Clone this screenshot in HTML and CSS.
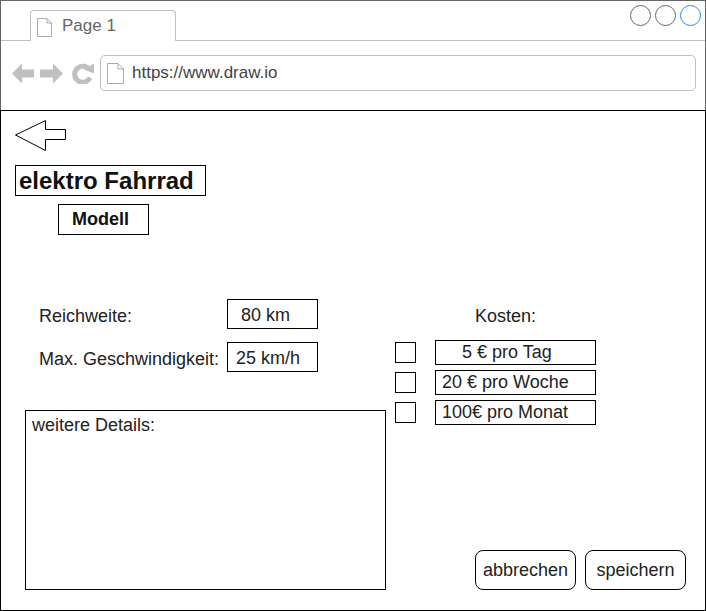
FILE: index.html
```html
<!DOCTYPE html>
<html lang="de">
<head>
    <meta charset="UTF-8">
    <meta name="viewport" content="width=device-width, initial-scale=1.0">
    <title>Fahrrad mieten</title>
    <link rel="stylesheet" href="styles.css">
</head>
<body>
    <div class="window">
        <header class="chrome">
            <div class="tabbar">
                <div class="tab">
                    <svg class="file" width="15" height="19" viewBox="0 0 15 19">
                        <path d="M0.5 0.5 H10 L14.5 5 V18.5 H0.5 Z" fill="#fff" stroke="#aaa"/>
                        <path d="M10 0.5 V5 H14.5" fill="none" stroke="#aaa"/>
                    </svg>
                    <span>Page 1</span>
                </div>
                <div class="dots">
                    <span class="dot"></span>
                    <span class="dot"></span>
                    <span class="dot blue"></span>
                </div>
            </div>
            <div class="navbar">
                <svg class="nav" width="22" height="21" viewBox="0 0 22 21">
                    <polygon points="0,10.5 10,0.5 10,6.5 22,6.5 22,14.5 10,14.5 10,20.5" fill="#c0c0c0"/>
                </svg>
                <svg class="nav" width="23" height="21" viewBox="0 0 23 21">
                    <polygon points="23,10.5 13,0.5 13,6.5 0,6.5 0,14.5 13,14.5 13,20.5" fill="#c0c0c0"/>
                </svg>
                <svg class="nav" width="22" height="21" viewBox="0 0 22 21">
                    <path d="M17.5 7 A8 8 0 1 0 18 14.5" fill="none" stroke="#c0c0c0" stroke-width="5"/>
                    <polygon points="12,6.5 22,0.5 22,10.5" fill="#c0c0c0"/>
                </svg>
                <div class="url">
                    <svg class="file" width="17" height="21" viewBox="0 0 17 21">
                        <path d="M0.5 0.5 H11 L16.5 6 V20.5 H0.5 Z" fill="#fff" stroke="#aaa"/>
                        <path d="M11 0.5 V6 H16.5" fill="none" stroke="#aaa"/>
                    </svg>
                    <span>https://www.draw.io</span>
                </div>
            </div>
        </header>

        <main class="page">
            <svg class="back" width="53" height="31" viewBox="0 0 53 31">
                <polygon points="0.5,15 30.5,0.5 30.5,9.5 50.5,9.5 50.5,19.5 30.5,19.5 30.5,30.5" fill="#fff" stroke="#000"/>
            </svg>
            <div class="title">elektro Fahrrad</div>
            <div class="model">Modell</div>

            <div class="form">
                <div class="specs">
                    <div class="spec-row">
                        <span class="label">Reichweite:</span>
                        <span class="value"> 80 km</span>
                    </div>
                    <div class="spec-row">
                        <span class="label">Max. Geschwindigkeit:</span>
                        <span class="value">25 km/h</span>
                    </div>
                    <div class="details">weitere Details:</div>
                </div>

                <div class="costs">
                    <div class="costs-head">Kosten:</div>
                    <ul class="prices">
                        <li><span class="check"></span><span class="price">    5 € pro Tag</span></li>
                        <li><span class="check"></span><span class="price">20 € pro Woche</span></li>
                        <li><span class="check"></span><span class="price">100€ pro Monat</span></li>
                    </ul>
                    <div class="actions">
                        <button class="btn">abbrechen</button>
                        <button class="btn">speichern</button>
                    </div>
                </div>
            </div>
        </main>
    </div>
</body>
</html>
```

FILE: styles.css
```css
body {
    margin: 0;
    font-family: "Liberation Sans", Arial, sans-serif;
    color: #222;
    background: #fff;
}

.window {
    width: 706px;
    height: 611px;
    display: flex;
    flex-direction: column;
}

/* Browser chrome */
.chrome {
    height: 110px;
    box-sizing: border-box;
    border: 1px solid #666;
    border-bottom: none;
    display: flex;
    flex-direction: column;
}

.tabbar {
    height: 40px;
    box-sizing: border-box;
    border-bottom: 1px solid #c0c0c0;
    display: flex;
}

.tab {
    align-self: flex-end;
    width: 146px;
    height: 31px;
    box-sizing: border-box;
    margin: 0 0 -1px 29px;
    padding: 0 0 0 6px;
    border: 1px solid #c0c0c0;
    border-bottom: none;
    border-radius: 4px 4px 0 0;
    background: #fff;
    display: flex;
    align-items: center;
    gap: 10px;
    font-size: 17px;
    color: #666;
}

.tab .file {
    margin-top: 2px;
}

.dots {
    margin: 4px 4px 0 auto;
    display: flex;
    gap: 4px;
}

.dot {
    width: 21px;
    height: 21px;
    box-sizing: border-box;
    border: 1px solid #666;
    border-radius: 50%;
}

.dot.blue {
    border-color: #1a8cff;
}

.navbar {
    flex: 1;
    display: flex;
    align-items: flex-start;
    padding: 14px 9px 0 11px;
}

.nav {
    margin-top: 8px;
    margin-right: 6px;
}

.nav:nth-of-type(2) {
    margin-right: 9px;
}

.url {
    flex: 1;
    height: 36px;
    box-sizing: border-box;
    padding-left: 6px;
    border: 1px solid #c0c0c0;
    border-radius: 5px;
    display: flex;
    align-items: center;
    gap: 8px;
    font-size: 17px;
    color: #444;
}

/* Page content */
.page {
    flex: 1;
    box-sizing: border-box;
    border: 1px solid #000;
    display: flex;
    flex-direction: column;
    align-items: flex-start;
    font-size: 18px;
}

.back {
    display: block;
    margin: 9px 0 0 14px;
}

.title {
    width: 191px;
    height: 31px;
    box-sizing: border-box;
    margin: 14px 0 0 14px;
    padding-left: 3px;
    border: 1px solid #000;
    font-size: 24px;
    font-weight: bold;
    line-height: 30px;
    color: #111;
}

.model {
    width: 91px;
    height: 31px;
    box-sizing: border-box;
    margin: 8px 0 0 57px;
    padding-left: 13px;
    border: 1px solid #000;
    font-weight: bold;
    line-height: 29px;
    color: #111;
}

.form {
    align-self: stretch;
    display: flex;
    gap: 9px;
    margin: 64px 19px 0 24px;
}

.specs {
    width: 361px;
    display: flex;
    flex-direction: column;
}

.spec-row {
    display: flex;
    align-items: center;
    height: 30px;
    padding-left: 14px;
}

.spec-row + .spec-row {
    margin-top: 13px;
}

.label {
    width: 188px;
    padding-top: 4px;
}

.value {
    width: 91px;
    height: 30px;
    box-sizing: border-box;
    padding: 1px 0 0 8px;
    border: 1px solid #000;
    line-height: 28px;
    white-space: pre;
}

.details {
    height: 180px;
    box-sizing: border-box;
    margin-top: 38px;
    padding: 4px 6px;
    border: 1px solid #000;
}

.costs {
    flex: 1;
    display: flex;
    flex-direction: column;
}

.costs-head {
    height: 30px;
    padding: 3px 0 0 80px;
    box-sizing: border-box;
    line-height: 28px;
}

.prices {
    list-style: none;
    margin: 11px 0 0;
    padding: 0;
    display: flex;
    flex-direction: column;
    gap: 5px;
}

.prices li {
    display: flex;
    align-items: center;
    height: 25px;
}

.check {
    width: 21px;
    height: 21px;
    box-sizing: border-box;
    border: 1px solid #000;
}

.price {
    width: 161px;
    height: 25px;
    box-sizing: border-box;
    margin-left: 19px;
    padding-left: 6px;
    border: 1px solid #000;
    line-height: 23px;
    white-space: pre;
}

.actions {
    margin-top: auto;
    align-self: flex-end;
    display: flex;
    gap: 9px;
}

.btn {
    width: 101px;
    height: 40px;
    border: 1px solid #000;
    border-radius: 8px;
    background: #fff;
    font-family: inherit;
    font-size: 18px;
    color: #222;
    padding: 0;
}
```
